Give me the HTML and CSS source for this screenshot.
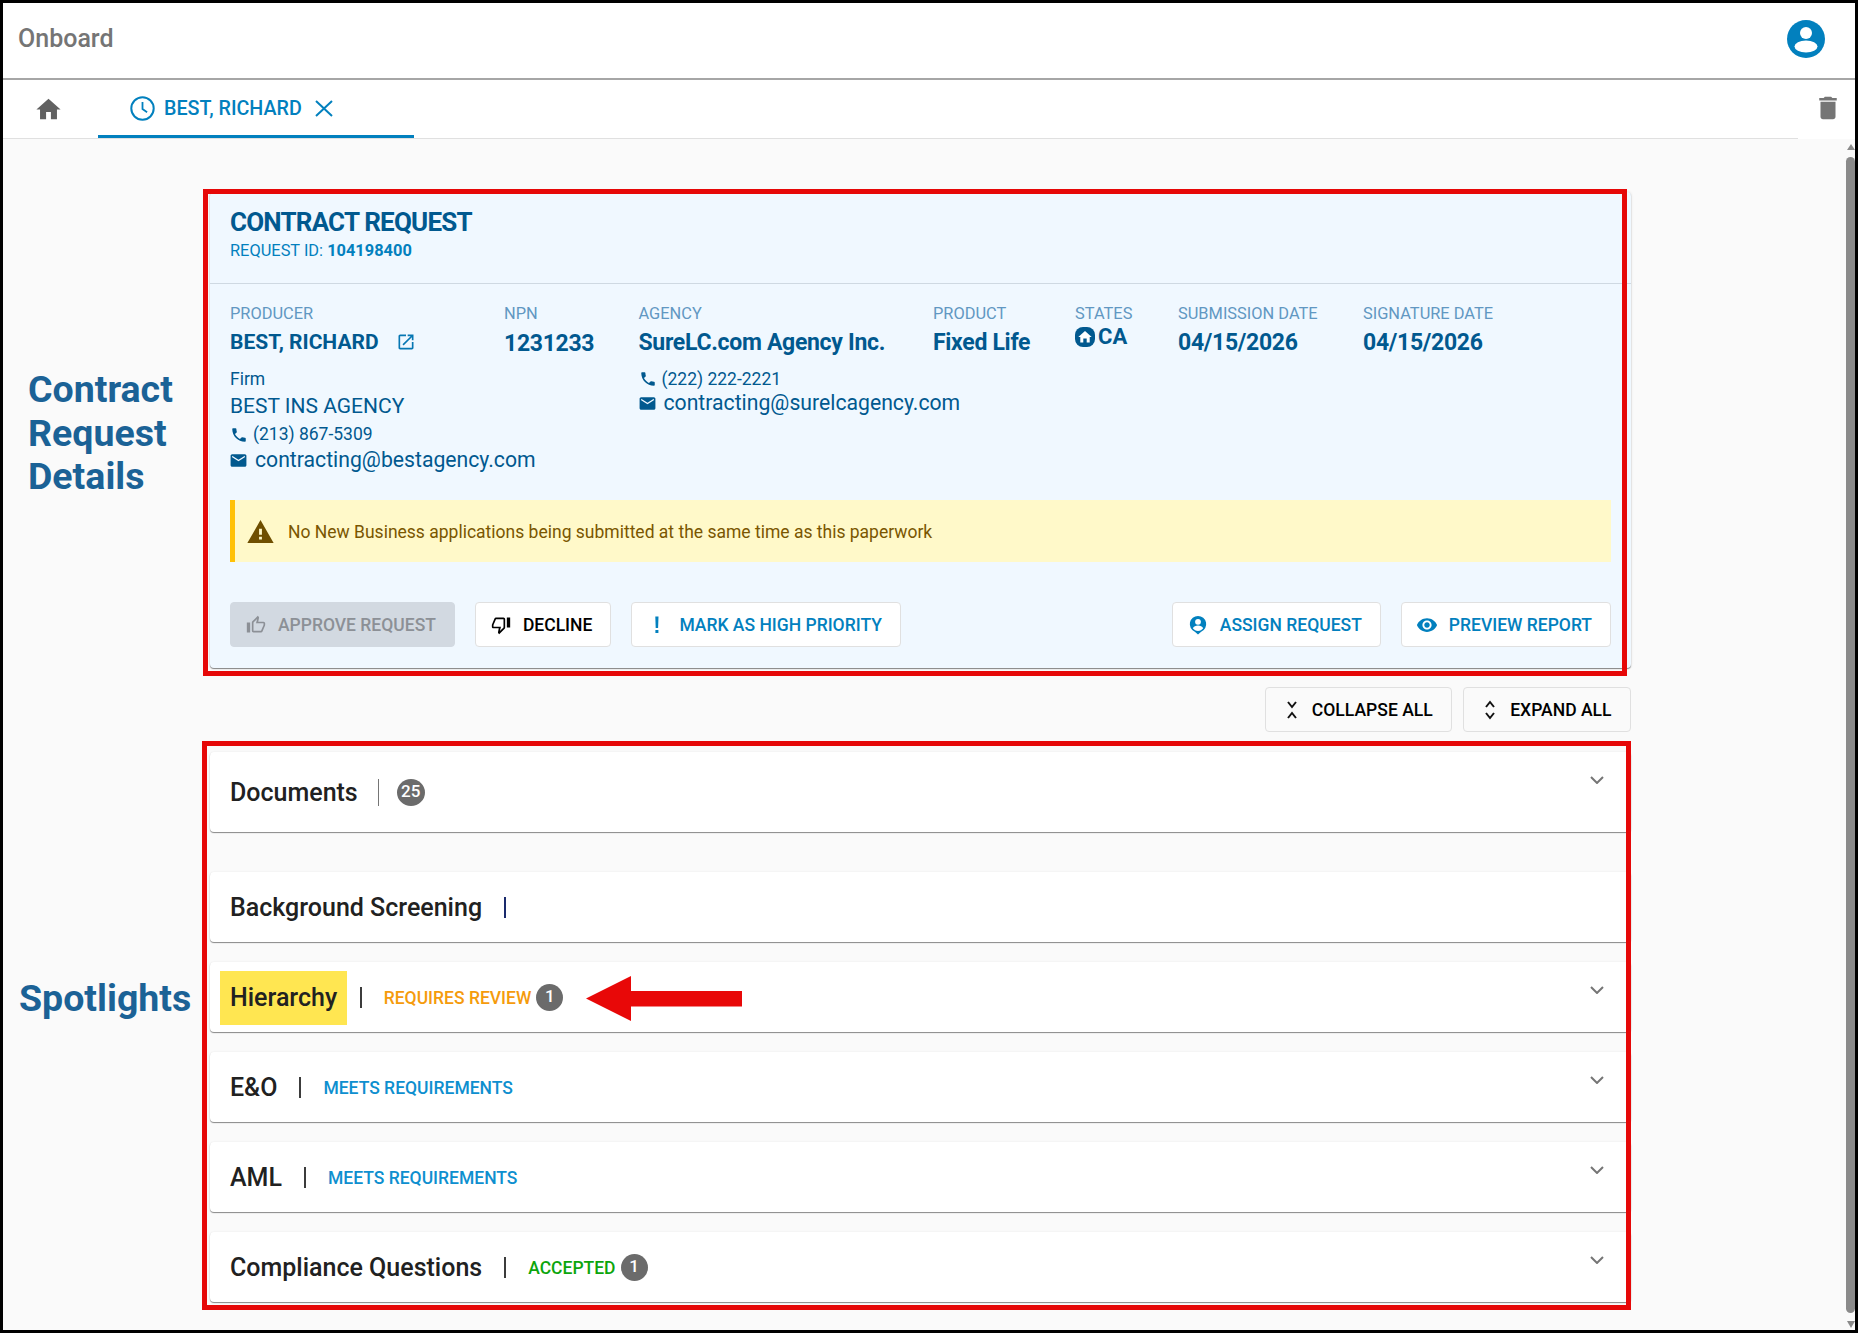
FILE: index.html
```html
<!DOCTYPE html>
<html lang="en">
<head>
    <meta charset="UTF-8">
    <title>Onboard</title>
    <link rel="stylesheet" href="styles.css">
</head>
<body>
    <div class="frame">
        <header class="topbar">
            <span class="brand">Onboard</span>
            <svg class="user-icon" viewBox="0 0 38 38"><circle cx="19" cy="19" r="19" fill="#0280be"/><circle cx="19" cy="13" r="6" fill="#fff"/><ellipse cx="19" cy="26.5" rx="11.5" ry="6" fill="#fff"/></svg>
        </header>

        <nav class="tabs">
            <div class="tab-strip">
                <svg class="home-icon" viewBox="0 0 24 24"><path d="M10 20v-6h4v6h5v-8h3L12 3 2 12h3v8z"/></svg>
                <div class="tab">
                    <svg class="clock-icon" viewBox="0 0 25 25"><circle cx="12.5" cy="12.5" r="11.2" fill="none" stroke="#0280be" stroke-width="2"/><path d="M12.5 6v7l4.6 3.2" fill="none" stroke="#0280be" stroke-width="1.8"/></svg>
                    <span>BEST, RICHARD</span>
                    <svg class="close-icon" viewBox="0 0 18 17"><path d="M1 1l16 15M17 1L1 16" fill="none" stroke="#0280be" stroke-width="2"/></svg>
                </div>
            </div>
            <svg class="trash-icon" viewBox="0 0 24 24"><path d="M6 19c0 1.1.9 2 2 2h8c1.1 0 2-.9 2-2V7H6v12zM19 4h-3.5l-1-1h-5l-1 1H5v2h14V4z"/></svg>
        </nav>

        <div class="body-row">
            <main class="content">
                <section class="request-card">
                    <div class="request-head">
                        <h1>CONTRACT REQUEST</h1>
                        <p>REQUEST ID: <b>104198400</b></p>
                    </div>

                    <div class="details">
                        <div class="col">
                            <div class="label">PRODUCER</div>
                            <div class="value value-name">BEST, RICHARD <svg class="open-icon" viewBox="0 0 24 24"><path d="M19 19H5V5h7V3H5c-1.11 0-2 .9-2 2v14c0 1.1.89 2 2 2h14c1.1 0 2-.9 2-2v-7h-2v7zM14 3v2h3.59l-9.83 9.83 1.41 1.41L19 6.41V10h2V3h-7z"/></svg></div>
                            <div class="firm-label">Firm</div>
                            <div class="firm-name">BEST INS AGENCY</div>
                            <div class="phone firm-phone"><svg viewBox="0 0 24 24"><path d="M6.62 10.79c1.44 2.83 3.76 5.14 6.59 6.59l2.2-2.2c.27-.27.67-.36 1.02-.24 1.12.37 2.33.57 3.57.57.55 0 1 .45 1 1V20c0 .55-.45 1-1 1-9.39 0-17-7.61-17-17 0-.55.45-1 1-1h3.5c.55 0 1 .45 1 1 0 1.25.2 2.45.57 3.57.11.35.03.74-.25 1.02l-2.2 2.2z"/></svg>(213) 867-5309</div>
                            <div class="email firm-email"><svg viewBox="0 0 24 24"><path d="M20 4H4c-1.1 0-1.99.9-1.99 2L2 18c0 1.1.9 2 2 2h16c1.1 0 2-.9 2-2V6c0-1.1-.9-2-2-2zm0 4l-8 5-8-5V6l8 5 8-5v2z"/></svg>contracting@bestagency.com</div>
                        </div>
                        <div class="col">
                            <div class="label">NPN</div>
                            <div class="value value-npn">1231233</div>
                        </div>
                        <div class="col">
                            <div class="label">AGENCY</div>
                            <div class="value">SureLC.com Agency Inc.</div>
                            <div class="phone agency-phone"><svg viewBox="0 0 24 24"><path d="M6.62 10.79c1.44 2.83 3.76 5.14 6.59 6.59l2.2-2.2c.27-.27.67-.36 1.02-.24 1.12.37 2.33.57 3.57.57.55 0 1 .45 1 1V20c0 .55-.45 1-1 1-9.39 0-17-7.61-17-17 0-.55.45-1 1-1h3.5c.55 0 1 .45 1 1 0 1.25.2 2.45.57 3.57.11.35.03.74-.25 1.02l-2.2 2.2z"/></svg>(222) 222-2221</div>
                            <div class="email agency-email"><svg viewBox="0 0 24 24"><path d="M20 4H4c-1.1 0-1.99.9-1.99 2L2 18c0 1.1.9 2 2 2h16c1.1 0 2-.9 2-2V6c0-1.1-.9-2-2-2zm0 4l-8 5-8-5V6l8 5 8-5v2z"/></svg>contracting@surelcagency.com</div>
                        </div>
                        <div class="col">
                            <div class="label">PRODUCT</div>
                            <div class="value">Fixed Life</div>
                        </div>
                        <div class="col">
                            <div class="label">STATES</div>
                            <div class="state">
                                <svg class="state-icon" viewBox="0 0 20 20"><rect x="0" y="0" width="20" height="20" rx="8" fill="#01598f"/><path d="M8.3 15.5v-4h3.4v4h3v-5.5h2L10 4 3.3 10h2v5.5z" fill="#fff"/></svg>
                                <span>CA</span>
                            </div>
                        </div>
                        <div class="col">
                            <div class="label">SUBMISSION DATE</div>
                            <div class="value">04/15/2026</div>
                        </div>
                        <div class="col">
                            <div class="label">SIGNATURE DATE</div>
                            <div class="value">04/15/2026</div>
                        </div>
                    </div>

                    <div class="notice">
                        <svg viewBox="0 0 24 21"><path d="M12 0L0 21h24L12 0zm1.3 17.8h-2.6v-2.6h2.6v2.6zm0-4.4h-2.6V8h2.6v5.4z"/></svg>
                        <span>No New Business applications being submitted at the same time as this paperwork</span>
                    </div>

                    <div class="actions">
                        <button class="btn btn-disabled"><svg viewBox="0 0 24 24"><path d="M9 21h9c.83 0 1.54-.5 1.84-1.22l3.02-7.05c.09-.23.14-.47.14-.73v-2c0-1.1-.9-2-2-2h-6.31l.95-4.57.03-.32c0-.41-.17-.79-.44-1.06L14.17 1 7.58 7.59C7.22 7.95 7 8.45 7 9v10c0 1.1.9 2 2 2zM9 9l4.34-4.34L12 10h9v2l-3 7H9V9zM1 9h4v12H1z"/></svg>APPROVE REQUEST</button>
                        <button class="btn btn-dark"><svg viewBox="0 0 24 24"><path d="M15 3H6c-.83 0-1.54.5-1.84 1.22l-3.02 7.05c-.09.23-.14.47-.14.73v2c0 1.1.9 2 2 2h6.31l-.95 4.57-.03.32c0 .41.17.79.44 1.06L9.83 23l6.59-6.59c.36-.36.58-.86.58-1.41V5c0-1.1-.9-2-2-2zm0 12l-4.34 4.34L12 14H3v-2l3-7h9v10zm4-12h4v12h-4z"/></svg>DECLINE</button>
                        <button class="btn"><svg viewBox="0 0 20 20"><path d="M8.3 1.5h3.2l-.4 11.5H8.7zM8.4 15h3v3h-3z"/></svg>MARK AS HIGH PRIORITY</button>
                        <button class="btn btn-push"><svg viewBox="0 0 20 22"><path d="M10 1a9 9 0 0 0-3.5 17.3L10 21.5l3.5-3.2A9 9 0 0 0 10 1z"/><circle cx="10" cy="7.5" r="3.2" fill="#fff"/><path d="M4.3 14.5c1-2 3.2-3 5.700-3s4.700 1 5.700 3c-1.300 1.800-3.300 3-5.700 3s-4.400-1.200-5.700-3z" fill="#fff"/></svg>ASSIGN REQUEST</button>
                        <button class="btn btn-preview"><svg viewBox="0 0 24 24"><path d="M12 4.5C7 4.5 2.73 7.61 1 12c1.73 4.39 6 7.5 11 7.5s9.27-3.11 11-7.5c-1.73-4.39-6-7.5-11-7.5zM12 17c-2.76 0-5-2.24-5-5s2.24-5 5-5 5 2.24 5 5-2.24 5-5 5zm0-8c-1.66 0-3 1.34-3 3s1.34 3 3 3 3-1.34 3-3-1.34-3-3-3z"/></svg>PREVIEW REPORT</button>
                    </div>
                </section>

                <div class="toggle-row">
                    <button class="toggle"><svg viewBox="0 0 12 20"><path d="M2 2l4 5 4-5M2 18l4-5 4 5" fill="none" stroke="#111" stroke-width="2"/></svg>COLLAPSE ALL</button>
                    <button class="toggle"><svg viewBox="0 0 12 20"><path d="M2 7l4-5 4 5M2 13l4 5 4-5" fill="none" stroke="#111" stroke-width="2"/></svg>EXPAND ALL</button>
                </div>

                <section class="panel panel-documents">
                    <span class="panel-title">Documents</span>
                    <i class="sep sep-thin"></i>
                    <span class="count count-wide">25</span>
                    <svg class="chevron" viewBox="0 0 14 8"><path d="M1 1l6 6 6-6" fill="none" stroke="#757575" stroke-width="2"/></svg>
                </section>

                <section class="panel panel-screening">
                    <span class="panel-title">Background Screening</span>
                    <i class="sep sep-navy"></i>
                </section>

                <section class="panel">
                    <span class="panel-title panel-title-marked">Hierarchy</span>
                    <i class="sep sep-marked"></i>
                    <span class="status status-review">REQUIRES REVIEW</span>
                    <span class="count">1</span>
                    <svg class="chevron" viewBox="0 0 14 8"><path d="M1 1l6 6 6-6" fill="none" stroke="#757575" stroke-width="2"/></svg>
                </section>

                <section class="panel">
                    <span class="panel-title">E&amp;O</span>
                    <i class="sep"></i>
                    <span class="status status-ok">MEETS REQUIREMENTS</span>
                    <svg class="chevron" viewBox="0 0 14 8"><path d="M1 1l6 6 6-6" fill="none" stroke="#757575" stroke-width="2"/></svg>
                </section>

                <section class="panel">
                    <span class="panel-title">AML</span>
                    <i class="sep"></i>
                    <span class="status status-ok">MEETS REQUIREMENTS</span>
                    <svg class="chevron" viewBox="0 0 14 8"><path d="M1 1l6 6 6-6" fill="none" stroke="#757575" stroke-width="2"/></svg>
                </section>

                <section class="panel">
                    <span class="panel-title">Compliance Questions</span>
                    <i class="sep"></i>
                    <span class="status status-accepted">ACCEPTED</span>
                    <span class="count">1</span>
                    <svg class="chevron" viewBox="0 0 14 8"><path d="M1 1l6 6 6-6" fill="none" stroke="#757575" stroke-width="2"/></svg>
                </section>
            </main>

            <div class="scrollbar">
                <i class="scroll-up"></i>
                <i class="scroll-thumb"></i>
                <i class="scroll-down"></i>
            </div>
        </div>

        <!-- annotations laid over the app screenshot -->
        <div class="note note-request">Contract<br>Request<br>Details</div>
        <div class="note note-spotlights">Spotlights</div>
        <div class="mark-box mark-request"></div>
        <div class="mark-box mark-spotlights"></div>
        <svg class="mark-arrow" viewBox="0 0 156 45"><path d="M0 22.5L45 0v15h111v15.5H45V45z"/></svg>
    </div>
</body>
</html>
```

FILE: styles.css
```css
* {
    box-sizing: border-box;
}
body {
    margin: 0;
    font-family: Roboto, "Liberation Sans", sans-serif;
    background-color: #000;
}
.frame {
    position: relative;
    width: 1858px;
    height: 1333px;
    border: 3px solid #000;
    background-color: #fafafa;
    display: flex;
    flex-direction: column;
    overflow: hidden;
}

/* top bar */
.topbar {
    height: 77px;
    flex: none;
    padding: 0 30px 4px 15px;
    background-color: #fff;
    border-bottom: 2px solid #a6a6a6;
    display: flex;
    align-items: center;
    justify-content: space-between;
}
.brand {
    font-size: 25px;
    font-weight: 500;
    color: #757575;
}
.user-icon {
    width: 38px;
    height: 38px;
}

/* tabs */
.tabs {
    height: 59px;
    flex: none;
    background-color: #fff;
    display: flex;
    align-items: flex-start;
}
.tab-strip {
    width: 1795px;
    height: 59px;
    border-bottom: 1px solid #e0e0e0;
    display: flex;
}
.home-icon {
    width: 29px;
    height: 29px;
    margin: 15px 0 0 31px;
    fill: #616161;
}
.tab {
    width: 316px;
    height: 58px;
    margin-left: 35px;
    padding: 2px 0 0 32px;
    border-bottom: 3px solid #0280be;
    display: flex;
    align-items: center;
    color: #0280be;
    font-size: 19.7px;
    font-weight: 500;
}
.clock-icon {
    width: 25px;
    height: 25px;
    margin-right: 9px;
}
.close-icon {
    width: 18px;
    height: 17px;
    margin-left: 13px;
}
.trash-icon {
    width: 30px;
    height: 30px;
    margin: 13px 0 0 15px;
    fill: #757575;
}

/* page body */
.body-row {
    flex: 1;
    display: flex;
    min-height: 0;
}
.content {
    width: 1843px;
    padding: 53px 0 0 207px;
}
.request-card {
    width: 1421px;
    height: 476px;
    background-color: #f0f8ff;
    border-radius: 4px;
    box-shadow: 0 1px 1px rgba(0, 0, 0, 0.45), 0 0 3px rgba(0, 0, 0, 0.12);
}
.request-head {
    height: 92px;
    padding: 15px 20px 0;
    border-bottom: 1px solid #cfd9e2;
}
.request-head h1 {
    margin: 0;
    font-size: 26px;
    line-height: 30px;
    font-weight: 700;
    letter-spacing: -0.8px;
    color: #01598f;
}
.request-head p {
    margin: 4px 0 0;
    font-size: 16.4px;
    line-height: 20px;
    color: #0280be;
}
.details {
    height: 216px;
    padding: 20px 0 0 20px;
    display: grid;
    grid-template-columns: 274px 134.5px 294.5px 142px 103px 185px 1fr;
    color: #01598f;
}
.label {
    font-size: 16.4px;
    line-height: 20px;
    color: #6197c2;
}
.value {
    margin-top: 5px;
    font-size: 23px;
    line-height: 28px;
    font-weight: 700;
    letter-spacing: -0.3px;
}
.value-name {
    font-size: 21px;
    letter-spacing: 0;
    display: flex;
    align-items: center;
    gap: 17px;
    white-space: nowrap;
    line-height: 26px;
}
.value-npn {
    margin-top: 6px;
}
.open-icon {
    width: 20px;
    height: 20px;
    fill: #0677b3;
}
.firm-label {
    margin-top: 13px;
    font-size: 17.5px;
    line-height: 22px;
}
.firm-name {
    margin-top: 2px;
    font-size: 21px;
    line-height: 28px;
}
.phone,
.email {
    display: flex;
    align-items: center;
    white-space: nowrap;
}
.phone {
    font-size: 17.5px;
}
.phone svg {
    width: 18px;
    height: 18px;
    flex: none;
    margin-right: 5px;
    fill: #01598f;
}
.email {
    font-size: 21.2px;
    line-height: 28px;
}
.email svg {
    width: 19px;
    height: 19px;
    flex: none;
    margin: 0 7px 0 -1px;
    fill: #01598f;
}
.firm-phone {
    margin-top: 2px;
    line-height: 25px;
}
.firm-email {
    margin-top: -1px;
}
.agency-phone {
    margin-top: 11px;
    line-height: 22px;
}
.agency-email {
    margin-top: -1px;
}
.state {
    margin-top: 3px;
    display: flex;
    align-items: center;
    gap: 3px;
    font-size: 22px;
    line-height: 20px;
    font-weight: 700;
}
.state-icon {
    width: 20px;
    height: 20px;
}
.notice {
    height: 62px;
    margin: 0 20px;
    padding-left: 12px;
    background-color: #fff9c9;
    border-left: 5px solid #ffc107;
    display: flex;
    align-items: center;
    gap: 14px;
    color: #7a5600;
    font-size: 17.5px;
}
.notice svg {
    width: 27px;
    height: 23px;
    fill: #6f4f00;
}
.notice span {
    margin-top: 1px;
}
.actions {
    margin: 40px 20px 0;
    display: flex;
    gap: 20px;
}
.btn {
    height: 45px;
    padding: 0 18px 0 15px;
    background-color: #fff;
    border: 1px solid #e0e0e0;
    border-radius: 4px;
    display: flex;
    align-items: center;
    gap: 12px;
    font-family: inherit;
    font-size: 17.5px;
    font-weight: 500;
    color: #0280be;
}
.btn svg {
    width: 20px;
    height: 20px;
    fill: #0280be;
}
.btn-preview svg {
    width: 22px;
    height: 22px;
    margin: 0 -1px;
}
.btn-disabled {
    background-color: #d2d9e1;
    border-color: #d2d9e1;
    color: #8c9096;
}
.btn-disabled svg {
    fill: #8c9096;
}
.btn-dark {
    color: #000;
}
.btn-dark svg {
    fill: #000;
}
.btn-push {
    margin-left: auto;
}
.toggle-row {
    width: 1421px;
    margin-top: 19px;
    display: flex;
    justify-content: flex-end;
    gap: 11px;
}
.toggle {
    height: 45px;
    padding: 0 18.5px 0 20px;
    background-color: #fafafa;
    border: 1px solid #e0e0e0;
    border-radius: 4px;
    display: flex;
    align-items: center;
    gap: 14px;
    font-family: inherit;
    font-size: 17.55px;
    font-weight: 500;
    color: #000;
}
.toggle svg {
    width: 12px;
    height: 20px;
}

/* spotlight panels */
.panel {
    position: relative;
    width: 1421px;
    height: 70px;
    margin-top: 20px;
    padding-left: 20px;
    background-color: #fff;
    border-radius: 4px;
    box-shadow: 0 1px 1px rgba(0, 0, 0, 0.45), 0 0 2px rgba(0, 0, 0, 0.08);
    display: flex;
    align-items: center;
}
.panel-documents {
    height: 80px;
}
.panel-screening {
    margin-top: 40px;
}
.panel-title {
    font-size: 25px;
    font-weight: 500;
    color: #212121;
}
.panel-title-marked {
    height: 54px;
    margin: 2px 0 0 -10px;
    padding: 0 10px 1px;
    background-color: #ffe651;
    display: flex;
    align-items: center;
}
.sep {
    width: 2px;
    height: 21px;
    margin: 0 22px;
    background-color: #3c3c3c;
}
.sep-thin {
    width: 1px;
    height: 27px;
    margin: 0 18px 0 20px;
    background-color: #757575;
}
.sep-navy {
    background-color: #1a2a6c;
}
.sep-marked {
    margin-left: 12.5px;
}
.status {
    margin-top: 2px;
    font-size: 17.5px;
    font-weight: 500;
}
.status-review {
    color: #f59b0c;
}
.status-ok {
    color: #0e8fcf;
}
.status-accepted {
    color: #0ca50c;
}
.count {
    width: 27px;
    height: 27px;
    margin-left: 5px;
    padding-bottom: 2px;
    border-radius: 50%;
    background-color: #6b6b6b;
    color: #fff;
    font-size: 17px;
    font-weight: 500;
    display: flex;
    align-items: center;
    justify-content: center;
}
.count-wide {
    margin-left: 0;
    width: 28px;
}
.chevron {
    width: 14px;
    height: 8px;
    align-self: flex-start;
    margin: 24px 27px 0 auto;
}

/* fake scrollbar */
.scrollbar {
    width: 9px;
    padding-top: 5px;
    display: flex;
    flex-direction: column;
    align-items: center;
}
.scroll-up {
    border: 4.5px solid transparent;
    border-top: 0;
    border-bottom: 6px solid #8a8a8a;
}
.scroll-thumb {
    width: 9px;
    height: 1156px;
    margin: 7px 0 8px;
    background-color: #8a8a8a;
    border-radius: 5px;
}
.scroll-down {
    border: 4.5px solid transparent;
    border-bottom: 0;
    border-top: 7px solid #8a8a8a;
}

/* annotations */
.note {
    position: absolute;
    color: #1b6296;
    font-size: 37.5px;
    font-weight: 700;
    line-height: 43.5px;
}
.note-request {
    left: 25px;
    top: 365px;
}
.note-spotlights {
    left: 16px;
    top: 974px;
}
.mark-box {
    position: absolute;
    border: 5px solid #e60808;
}
.mark-request {
    left: 200px;
    top: 186px;
    width: 1424px;
    height: 487px;
}
.mark-spotlights {
    left: 199px;
    top: 738px;
    width: 1429px;
    height: 569px;
}
.mark-arrow {
    position: absolute;
    left: 583px;
    top: 973px;
    width: 156px;
    height: 45px;
    fill: #e80808;
}
```
